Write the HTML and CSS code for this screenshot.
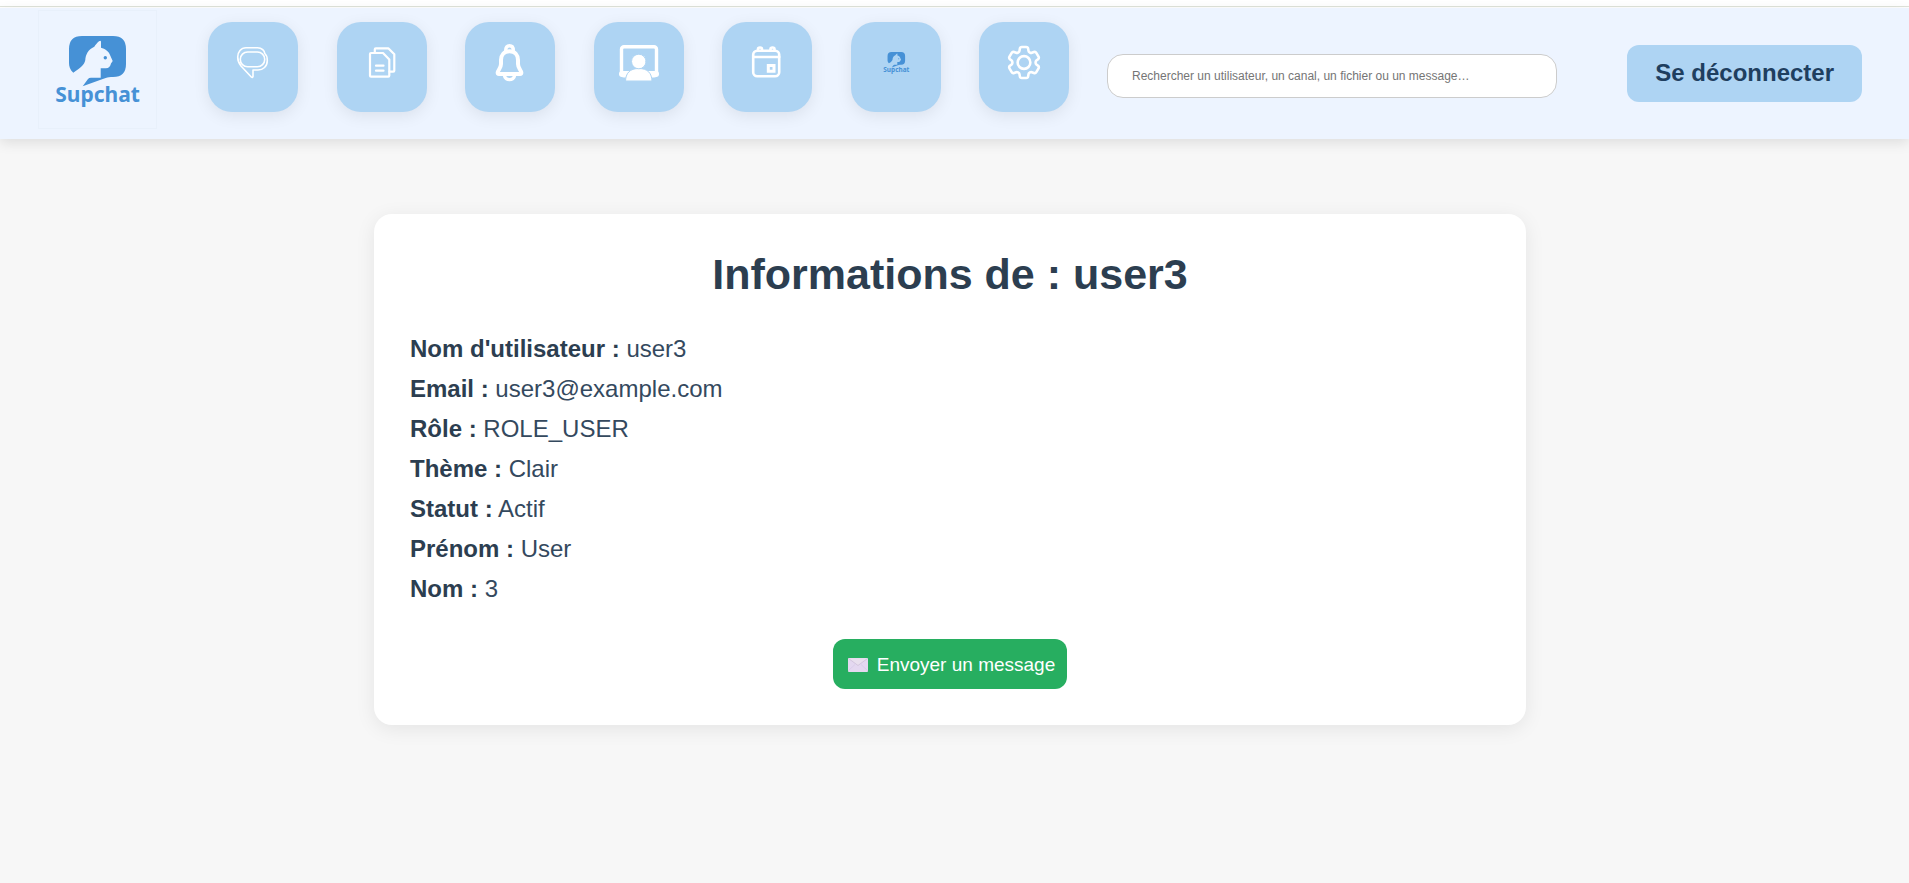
FILE: index.html
```html
<!DOCTYPE html>
<html lang="fr">
<head>
<meta charset="utf-8">
<meta name="viewport" content="width=device-width, initial-scale=1">
<title>Supchat</title>
<link rel="stylesheet" href="styles.css">
</head>
<body>
<header class="topbar">
  <a class="brand" href="#" aria-label="Supchat">
    <svg class="brand-logo" viewBox="0 0 120 120">
      <rect class="logo-frame" x="0.500" y="0.500" width="118" height="118"/>
      <g id="logo">
        <path fill="#4691d6" d="M35.300 62.700C32 60 31 56 31 53V39Q31 26 44 26H75Q88 26 88 39V54Q88 67 75 67C69 67 66 68.500 62 70L44.700 76.300L50 69Q51 67.700 53 67.700H62.700V58.300H68Q72 58 73 53.500L74.700 51L72 45C71 41.500 67 38.500 63 37.700V31.500Q62.500 30 61 31.300C59 33 57.500 35 56.300 36.700C50 39.500 47.500 45 47.300 50C46.500 55 42 58 35.300 62.700Z"/>
        <circle cx="67.300" cy="47.700" r="1.700" fill="#4691d6"/>
        <text class="logo-text" x="59.500" y="92" text-anchor="middle">Supchat</text>
      </g>
    </svg>
  </a>
  <nav class="nav">
    <a class="tile" href="#" aria-label="Messages">
      <svg class="icon" viewBox="0 0 40 40" stroke-width="1.600">
        <rect x="7.300" y="9" width="24.400" height="14.700" rx="7.300"/>
        <path d="M13 4.700H24.500C29 4.700 31.500 8 31.800 10.500C33.500 12 34.300 14 34.300 17.500C34.300 23.500 30 27 25 27H20V33.500Q19.500 35 18.300 34L8 23C5.500 20 4.700 17.500 4.700 14C4.700 9 8 4.700 13 4.700Z"/>
      </svg>
    </a>
    <a class="tile" href="#" aria-label="Fichiers">
      <svg class="icon" viewBox="0 0 40 40" stroke-width="2.200">
        <path d="M9 10H21L27.300 16.500V32.700Q27.300 33.700 26.300 33.700H9Q8 33.700 8 32.700V11Q8 10 9 10Z"/>
        <path d="M12.800 10V6.300Q12.800 5.300 13.800 5.300H26.300L32.300 11.300V27.700Q32.300 28.700 31.300 28.700H27.500M14 22.700H21.500M14 27.700H21.500"/>
      </svg>
    </a>
    <a class="tile" href="#" aria-label="Notifications">
      <svg class="icon" viewBox="0 0 40 40" stroke-width="4">
        <path d="M19.500 8.200C14 8.200 11 12 11 17V21C11 25 8 27 7.700 29.500Q7.500 31 9 31H30Q31.500 31 31.300 29.500C31 27 28 25 28 21V17C28 12 25 8.200 19.500 8.200Z"/>
        <path d="M15.700 7.500C15.700 4 17 2.800 19.500 2.800S23.300 4 23.300 7.500M14.500 32.500C15 38 24 38 24.500 32.500" stroke-width="3.400"/>
      </svg>
    </a>
    <a class="tile" href="#" aria-label="Visioconférence">
      <svg class="icon" viewBox="0 0 40 40" stroke-width="3.400">
        <rect x="2.500" y="3.700" width="35" height="29" rx="2.500"/>
        <path d="M3 31H37" stroke-width="6"/>
        <path class="person" d="M6.500 38.500C6.500 30 11 25.500 19.800 25.500S33 30 33 38.500Z" stroke-width="1"/>
        <path class="mask" d="M5 38.200H35" stroke-width="1.400" stroke-linecap="butt"/>
        <circle class="person" cx="19.800" cy="18.500" r="7.300" stroke-width="1"/>
      </svg>
    </a>
    <a class="tile" href="#" aria-label="Calendrier">
      <svg class="icon" viewBox="0 0 40 40" stroke-width="2.600">
        <rect x="6.200" y="7.700" width="26" height="25.600" rx="4"/>
        <path d="M6.200 14H32.200M11 7.500V6Q11 4.500 13 4.500T15 6V7.500M23.500 7.500V6Q23.500 4.500 25.500 4.500T27.500 6V7.500"/>
        <path d="M21.300 22.500H27V28.200H21.300Z" stroke-width="3" stroke-linejoin="miter"/>
      </svg>
    </a>
    <a class="tile" href="#" aria-label="Espaces de travail">
      <svg class="icon icon-logo" viewBox="0 0 40 40"><use href="#logo" transform="translate(2 1) scale(0.308)"/></svg>
    </a>
    <a class="tile" href="#" aria-label="Paramètres">
      <svg class="icon" viewBox="0 0 40 40">
        <g transform="translate(-0.640 -1.140) scale(1.720)" stroke-width="1.500">
          <path d="M9.594 3.94c.09-.542.56-.94 1.11-.94h2.593c.55 0 1.02.398 1.11.94l.213 1.281c.063.374.313.686.645.87.074.04.147.083.22.127.325.196.72.257 1.075.124l1.217-.456a1.125 1.125 0 0 1 1.37.49l1.296 2.247a1.125 1.125 0 0 1-.26 1.431l-1.003.827c-.293.241-.438.613-.43.992a7.723 7.723 0 0 1 0 .255c-.008.378.137.75.43.991l1.004.827c.424.35.534.955.26 1.43l-1.298 2.247a1.125 1.125 0 0 1-1.369.491l-1.217-.456c-.355-.133-.75-.072-1.076.124a6.47 6.47 0 0 1-.22.128c-.331.183-.581.495-.644.869l-.213 1.281c-.09.543-.56.94-1.11.94h-2.594c-.55 0-1.019-.398-1.11-.94l-.213-1.281c-.062-.374-.312-.686-.644-.87a6.52 6.52 0 0 1-.22-.127c-.325-.196-.72-.257-1.076-.124l-1.217.456a1.125 1.125 0 0 1-1.369-.49l-1.297-2.247a1.125 1.125 0 0 1 .26-1.431l1.004-.827c.292-.24.437-.613.43-.991a6.932 6.932 0 0 1 0-.255c.007-.38-.138-.751-.43-.992l-1.004-.827a1.125 1.125 0 0 1-.26-1.43l1.297-2.247a1.125 1.125 0 0 1 1.37-.491l1.216.456c.356.133.751.072 1.076-.124.072-.044.146-.086.22-.128.332-.183.582-.495.644-.869l.214-1.28Z"/>
          <circle cx="12" cy="12" r="3.700"/>
        </g>
      </svg>
    </a>
  </nav>
  <input class="search" type="search" aria-label="Rechercher" placeholder="Rechercher un utilisateur, un canal, un fichier ou un message…">
  <button class="logout" type="button">Se déconnecter</button>
</header>

<main class="page">
  <section class="card">
    <h1 class="card-title">Informations de : user3</h1>
    <div class="info">
      <p class="info-row"><strong>Nom d'utilisateur :</strong> user3</p>
      <p class="info-row"><strong>Email :</strong> user3@example.com</p>
      <p class="info-row"><strong>Rôle :</strong> ROLE_USER</p>
      <p class="info-row"><strong>Thème :</strong> Clair</p>
      <p class="info-row"><strong>Statut :</strong> Actif</p>
      <p class="info-row"><strong>Prénom :</strong> User</p>
      <p class="info-row"><strong>Nom :</strong> 3</p>
    </div>
    <button class="send" type="button">
      <svg class="envelope" viewBox="0 0 20 14" aria-hidden="true">
        <rect width="20" height="14" rx="1" fill="#e4d8f0"/>
        <path d="M0 13L7 6.500M20 13L13 6.500" stroke="#dacdea" fill="none"/>
        <path d="M0.500 0.500L10 7.500L19.500 0.500" stroke="#cdbfd8" stroke-width="0.800" fill="#e9e0ee"/>
      </svg>
      Envoyer un message
    </button>
  </section>
</main>
</body>
</html>
```

FILE: styles.css
```css
* {
  box-sizing: border-box;
}

body {
  margin: 0;
  min-height: 100vh;
  background: #f7f7f7;
  color: #34495e;
  font-family: "Liberation Sans", Arial, sans-serif;
}

body::before {
  content: "";
  display: block;
  height: 8px;
  background: linear-gradient(#fff 6px, #dfe3da 6px, #dfe3da 7px, #fff 7px);
}

/* Top bar */
.topbar {
  display: flex;
  align-items: center;
  min-height: 131px;
  padding: 0 47px 0 38px;
  background: #edf4ff;
  box-shadow: 0 4px 12px rgba(0, 0, 0, 0.1);
}

.brand {
  flex: none;
  align-self: flex-start;
  margin: 2px 50px 0 0;
}

.brand-logo {
  display: block;
  width: 120px;
  height: 120px;
  overflow: visible;
}

.logo-frame {
  fill: none;
  stroke: #e8f0fb;
}

.logo-text {
  fill: #4691d6;
  font-family: "Noto Sans", sans-serif;
  font-size: 21px;
  font-weight: 700;
}

.nav {
  display: flex;
  flex: 0 1 861px;
  align-self: flex-start;
  justify-content: space-between;
  margin: 14px 38px 0 0;
}

.tile {
  display: flex;
  justify-content: center;
  width: 90px;
  height: 90px;
  padding-top: 21px;
  border-radius: 24px;
  background: #aed4f3;
  box-shadow: 0 4px 16px rgba(0, 0, 0, 0.08);
}

.icon {
  width: 40px;
  height: 40px;
  fill: none;
  stroke: #fff;
  stroke-linecap: round;
  stroke-linejoin: round;
}

.icon-logo {
  overflow: visible;
  stroke: none;
}

.person {
  fill: #fff;
  stroke: #aed4f3;
}

.mask {
  stroke: #aed4f3;
}

.search {
  flex: 0 1 450px;
  min-width: 0;
  height: 44px;
  margin: 4px 0 0;
  padding: 0 24px;
  border: 1px solid #ccc;
  border-radius: 16px;
  background: #fff;
  color: #333;
  font: 12px "Liberation Sans", Arial, sans-serif;
}

.search::placeholder {
  color: #757575;
}

.logout {
  flex: none;
  margin-left: auto;
  padding: 14px 28px 15px;
  border: 0;
  border-radius: 12px;
  background: #aed4f3;
  color: #1f3f5f;
  font: bold 24px/28px "Liberation Sans", Arial, sans-serif;
}

/* User card */
.page {
  padding: 75px 9px 0 0;
}

.card {
  display: flex;
  flex-direction: column;
  max-width: 1152px;
  margin: 0 auto;
  padding: 36px;
  border-radius: 18px;
  background: #fff;
  box-shadow: 0 4px 20px rgba(0, 0, 0, 0.08);
}

.card-title {
  margin: 0 0 37px;
  color: #2c3e50;
  font-size: 43px;
  line-height: 48px;
  text-align: center;
}

.info {
  margin-bottom: 24px;
}

.info-row {
  margin: 0 0 12px;
  font-size: 24px;
  line-height: 28px;
}

.info-row strong {
  color: #2c3e50;
}

.send {
  display: flex;
  align-self: center;
  align-items: center;
  gap: 9px;
  height: 50px;
  padding: 2px 12px 0 15px;
  border: 0;
  border-radius: 12px;
  background: #27ae60;
  color: #fff;
  font: 19px "Liberation Sans", Arial, sans-serif;
}

.envelope {
  width: 20px;
  height: 14px;
}
```
